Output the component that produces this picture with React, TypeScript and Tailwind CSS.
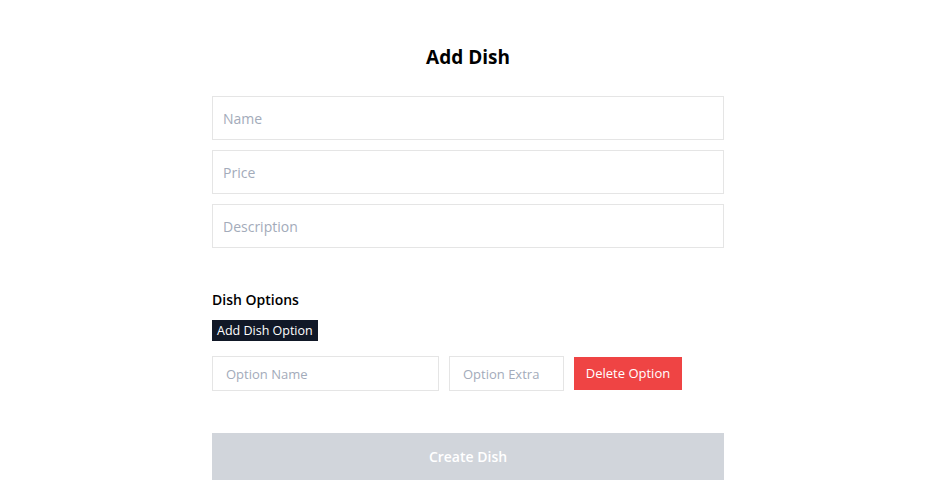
export default function App() {
  return (
    <div className="min-h-screen bg-white flex flex-col items-center pt-[43px] pl-[2px] font-['Open_Sans',sans-serif]">
      <h4 className="text-[19px] font-bold text-black leading-7 mb-[25px]">Add Dish</h4>
      <form className="w-[512px] flex flex-col">
        <div className="flex flex-col gap-[10px]">
          <input
            className="h-[44px] w-full border border-[#e5e5e5] px-[10px] text-sm text-gray-700 placeholder:text-[#a3abba] outline-none"
            placeholder="Name"
          />
          <input
            className="h-[44px] w-full border border-[#e5e5e5] px-[10px] text-sm text-gray-700 placeholder:text-[#a3abba] outline-none"
            placeholder="Price"
          />
          <input
            className="h-[44px] w-full border border-[#e5e5e5] px-[10px] text-sm text-gray-700 placeholder:text-[#a3abba] outline-none"
            placeholder="Description"
          />
        </div>

        <div className="mt-[42px]">
          <h4 className="text-sm font-semibold text-black leading-5">Dish Options</h4>
          <span className="inline-block mt-[10px] bg-[#111827] text-white text-[12.5px] leading-[21px] px-[5px] cursor-pointer">
            Add Dish Option
          </span>
          <div className="flex items-center mt-[15px] gap-[10px]">
            <input
              className="w-[227px] h-[35px] border border-[#e5e5e5] px-[13px] text-[13px] placeholder:text-[#a3abba] outline-none"
              placeholder="Option Name"
            />
            <input
              className="w-[115px] h-[35px] border border-[#e5e5e5] px-[13px] text-[13px] placeholder:text-[#a3abba] outline-none"
              placeholder="Option Extra"
            />
            <span className="w-[108px] h-[33px] bg-[#ef4444] text-white text-[13px] flex items-center justify-center cursor-pointer">
              Delete Option
            </span>
          </div>
        </div>

        <button
          type="button"
          className="mt-[42px] h-[47px] w-full bg-[#d1d5db] text-white text-sm font-semibold"
        >
          Create Dish
        </button>
      </form>
    </div>
  );
}
